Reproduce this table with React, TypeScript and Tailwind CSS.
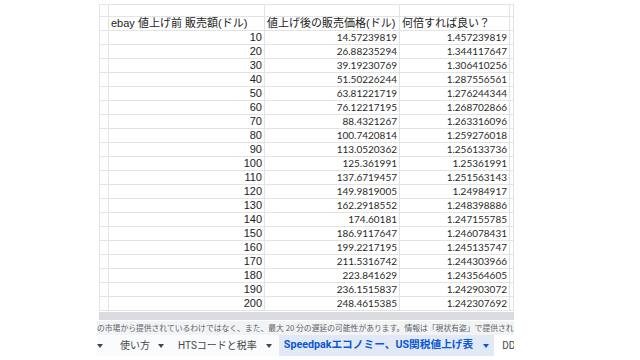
import React from "react";

const rows: [number, string, string][] = [
  [10, "14.57239819", "1.457239819"],
  [20, "26.88235294", "1.344117647"],
  [30, "39.19230769", "1.306410256"],
  [40, "51.50226244", "1.287556561"],
  [50, "63.81221719", "1.276244344"],
  [60, "76.12217195", "1.268702866"],
  [70, "88.4321267", "1.263316096"],
  [80, "100.7420814", "1.259276018"],
  [90, "113.0520362", "1.256133736"],
  [100, "125.361991", "1.25361991"],
  [110, "137.6719457", "1.251563143"],
  [120, "149.9819005", "1.24984917"],
  [130, "162.2918552", "1.248398886"],
  [140, "174.60181", "1.247155785"],
  [150, "186.9117647", "1.246078431"],
  [160, "199.2217195", "1.245135747"],
  [170, "211.5316742", "1.244303966"],
  [180, "223.841629", "1.243564605"],
  [190, "236.1515837", "1.242903072"],
  [200, "248.4615385", "1.242307692"],
];

const cell = "border-r border-b border-[#e2e3e3] overflow-hidden whitespace-nowrap";
const jp = "font-['Liberation_Sans','Noto_Sans_CJK_JP',sans-serif]";
const num = "font-['Lato',sans-serif] text-[10px] text-[#2a2a2a] text-right pr-[2px]";

function Caret({ active }: { active?: boolean }) {
  return (
    <svg width="6" height="4" viewBox="0 0 6 4" className="shrink-0">
      <path d="M0 0h6L3 4z" fill={active ? "#0b57d0" : "#444746"} />
    </svg>
  );
}

export default function App() {
  return (
    <div className="w-[640px] h-[360px] bg-white flex pl-[97px] pt-[4px]">
      <div className="w-[417px] flex flex-col overflow-hidden">
        <div className="ml-[2px] border-l border-t border-[#e2e3e3] w-[415px]">
          <div className="grid grid-cols-[9px_156px_135px_110px_4px] h-[12px]">
            <div className={cell} />
            <div className={cell} />
            <div className={cell} />
            <div className={cell} />
            <div className={cell} />
          </div>
          <div className={`grid grid-cols-[9px_156px_135px_110px_4px] h-[14px] text-[11px] leading-[13px] text-[#222] ${jp}`}>
            <div className={cell} />
            <div className={`${cell} pl-[2px]`}>ebay 値上げ前 販売額(ドル)</div>
            <div className={`${cell} pl-[2px]`}>値上げ後の販売価格(ドル)</div>
            <div className={`${cell} pl-[2px]`}>何倍すれば良い？</div>
            <div className={cell} />
          </div>
          {rows.map(([a, b, c]) => (
            <div key={a} className="grid grid-cols-[9px_156px_135px_110px_4px] h-[14px] leading-[13px]">
              <div className={cell} />
              <div className={`${cell} font-['Liberation_Sans',sans-serif] text-[11px] text-[#222] text-right pr-[2px]`}>{a}</div>
              <div className={`${cell} ${num}`}>{b}</div>
              <div className={`${cell} ${num}`}>{c}</div>
              <div className={cell} />
            </div>
          ))}
        </div>
        <div className="mt-[1px] ml-[2px] h-[8px] bg-[#dadce0]" />
        <div className="mt-[1px] h-[14px] bg-[#f1f3f4] flex items-center whitespace-nowrap text-[7.8px] text-[#5f6368] font-['Noto_Sans_CJK_JP',sans-serif]">
          の市場から提供されているわけではなく、また、最大 20 分の遅延の可能性があります。情報は「現状有姿」で提供されます。
        </div>
        <div className="h-[21px] bg-[#f9fbfd] flex items-stretch whitespace-nowrap text-[10px] text-[#444746] font-['Roboto','Noto_Sans_CJK_JP',sans-serif]">
          <div className="flex items-center pr-[10px]">
            <Caret />
          </div>
          <div className="flex items-center gap-[8px] px-[7px]">
            <span>使い方</span>
            <Caret />
          </div>
          <div className="flex items-center gap-[9px] px-[7px]">
            <span>HTSコードと税率</span>
            <Caret />
          </div>
          <div className="flex items-center gap-[10px] pl-[5px] pr-[5px] bg-[#e1e9f7] text-[#0b57d0] text-[10.7px] font-bold">
            <span>Speedpakエコノミー、US関税値上げ表</span>
            <Caret active />
          </div>
          <div className="flex items-center px-[8px] bg-white">
            <span>DD</span>
          </div>
        </div>
      </div>
    </div>
  );
}
